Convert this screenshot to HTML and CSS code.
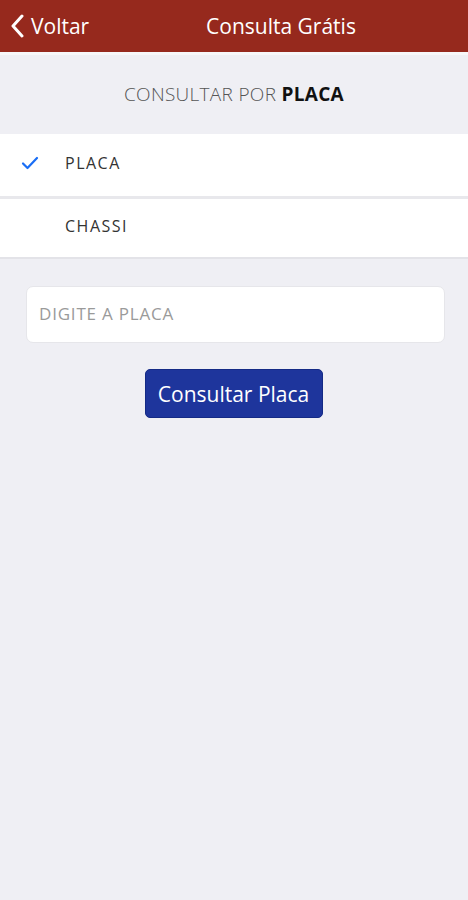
FILE: index.html
```html
<!DOCTYPE html>
<html lang="pt">
<head>
  <meta charset="UTF-8" />
  <meta name="viewport" content="width=device-width, initial-scale=1.0" />
  <title>Consulta Grátis</title>
  <link rel="stylesheet" href="styles.css">
</head>
<body>

<div class="navbar">
  <a class="back" href="#">
    <svg width="14" height="24" viewBox="0 0 14 24"><path d="M12 2 L3 12 L12 22" fill="none" stroke="#fff" stroke-width="3" stroke-linecap="round" stroke-linejoin="round"/></svg>
    Voltar
  </a>
  <div class="title">Consulta Grátis</div>
</div>

<p class="section-title">CONSULTAR POR <b>PLACA</b></p>

<div class="options">
  <div class="option">
    <span class="check">
      <svg width="18" height="14" viewBox="0 0 18 14"><path d="M2 7.5 L6.5 12 L16 2" fill="none" stroke="#1a6ef5" stroke-width="2.2" stroke-linecap="round" stroke-linejoin="round"/></svg>
    </span>
    PLACA
  </div>
  <div class="option">
    <span class="check"></span>
    CHASSI
  </div>
</div>

<div class="form">
  <input class="field" type="text" placeholder="DIGITE A PLACA">
  <button class="submit">Consultar Placa</button>
</div>

</body>
</html>
```

FILE: styles.css
```css
body {
  font-family: "Open Sans", sans-serif;
  margin: 0;
  background-color: #efeff4;
  min-height: 900px;
}
.navbar {
  position: relative;
  height: 52px;
  background: #96291d;
  color: #fff;
  display: flex;
  align-items: center;
  justify-content: center;
  padding-left: 94px;
  border-bottom: 3px solid #f7f7f9;
}
.back {
  position: absolute;
  left: 10px;
  top: 0;
  height: 52px;
  display: flex;
  align-items: center;
  gap: 7px;
  color: #fff;
  text-decoration: none;
  font-size: 21px;
}
.title {
  font-size: 21px;
}
.section-title {
  margin: 0;
  padding: 26px 0 27px;
  text-align: center;
  font-size: 19px;
  letter-spacing: 0.3px;
  color: #555;
  font-weight: 300;
}
.section-title b {
  font-weight: 700;
  color: #111;
}
.options {
  background: #fff;
  border-bottom: 2px solid #e3e3e8;
}
.option {
  height: 62px;
  box-sizing: border-box;
  padding-bottom: 5px;
  display: flex;
  align-items: center;
  font-size: 16px;
  letter-spacing: 1.5px;
  color: #333;
}
.option + .option {
  border-top: 3px solid #e8e8ec;
  height: 61px;
}
.check {
  width: 65px;
  padding-left: 21px;
  box-sizing: border-box;
  display: flex;
  align-items: center;
}
.form {
  padding: 27px 23px 0 26px;
  display: flex;
  flex-direction: column;
  align-items: center;
  gap: 26px;
}
.field {
  width: 100%;
  height: 57px;
  box-sizing: border-box;
  border: 1px solid #e6e6ea;
  border-radius: 7px;
  background: #fff;
  padding: 0 12px 3px;
  font-family: "Open Sans", sans-serif;
  font-size: 17px;
  letter-spacing: 0.8px;
}
.field::placeholder {
  color: #9a9a9a;
}
.submit {
  width: 178px;
  height: 49px;
  margin-right: 4px;
  background: #1e359c;
  border: 1px solid #142a85;
  border-radius: 5px;
  color: #fff;
  font-family: "Open Sans", sans-serif;
  font-size: 21px;
  cursor: pointer;
}
```
